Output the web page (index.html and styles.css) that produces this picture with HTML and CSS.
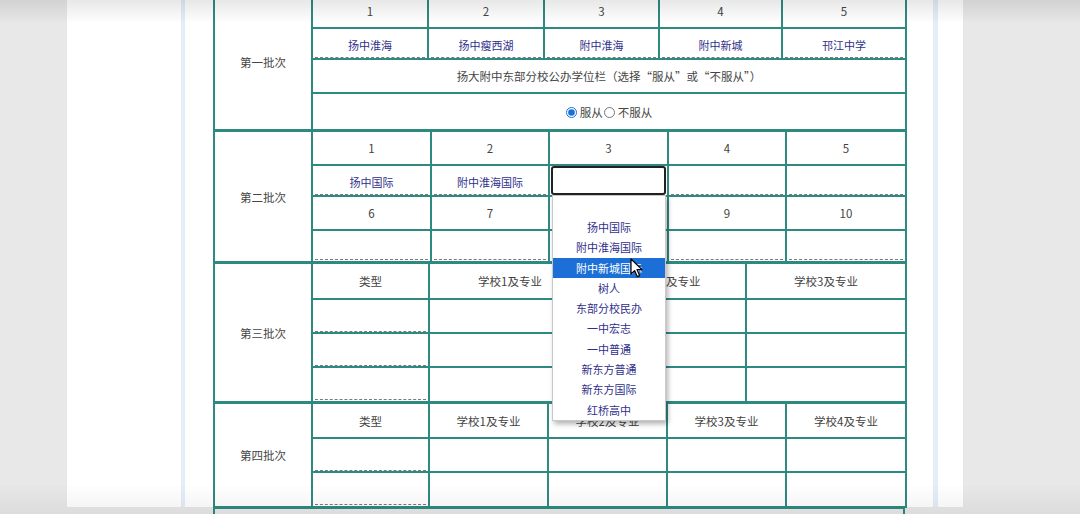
FILE: index.html
```html
<!DOCTYPE html>
<html lang="zh-CN">
<head>
    <meta charset="UTF-8">
    <meta name="viewport" content="width=device-width, initial-scale=1.0">
    <title>志愿填报</title>
    <link rel="stylesheet" href="styles.css">
</head>
<body>
    <div class="page">
        <div class="frame">
            <div class="sheet">
                <!-- 第一批次 -->
                <table class="batch">
                    <colgroup>
                        <col class="c-label"><col class="w116"><col class="w116"><col class="w115"><col class="w123"><col class="w124">
                    </colgroup>
                    <tr class="h34">
                        <td rowspan="4" class="label">第一批次</td>
                        <td>1</td><td>2</td><td>3</td><td>4</td><td>5</td>
                    </tr>
                    <tr class="h31">
                        <td><div class="pick">扬中淮海</div></td>
                        <td><div class="pick">扬中瘦西湖</div></td>
                        <td><div class="pick">附中淮海</div></td>
                        <td><div class="pick">附中新城</div></td>
                        <td><div class="pick">邗江中学</div></td>
                    </tr>
                    <tr class="h34">
                        <td colspan="5">扬大附中东部分校公办学位栏（选择“服从”或“不服从”）</td>
                    </tr>
                    <tr class="h37">
                        <td colspan="5" class="radios">
                            <label><input type="radio" name="obey" checked>服从</label><label><input type="radio" name="obey">不服从</label>
                        </td>
                    </tr>
                </table>

                <!-- 第二批次 -->
                <table class="batch">
                    <colgroup>
                        <col class="c-label"><col class="w119"><col class="w118"><col class="w119"><col class="w118"><col class="w120">
                    </colgroup>
                    <tr class="h34">
                        <td rowspan="4" class="label">第二批次</td>
                        <td>1</td><td>2</td><td>3</td><td>4</td><td>5</td>
                    </tr>
                    <tr class="h31">
                        <td><div class="pick">扬中国际</div></td>
                        <td><div class="pick">附中淮海国际</div></td>
                        <td class="open">
                            <div class="select-box"></div>
                            <div class="options">
                                <div class="opt blank"></div>
                                <div class="opt">扬中国际</div>
                                <div class="opt">附中淮海国际</div>
                                <div class="opt active">附中新城国际</div>
                                <div class="opt">树人</div>
                                <div class="opt">东部分校民办</div>
                                <div class="opt">一中宏志</div>
                                <div class="opt">一中普通</div>
                                <div class="opt">新东方普通</div>
                                <div class="opt">新东方国际</div>
                                <div class="opt">红桥高中</div>
                                <svg class="cursor" width="13" height="20" viewBox="0 0 13 20">
                                    <path d="M1 1 L1 16 L4.6 12.6 L7.2 18.6 L9.6 17.6 L7 11.6 L12 11.6 Z" fill="#fff" stroke="#000" stroke-width="1.2" stroke-linejoin="round"/>
                                </svg>
                            </div>
                        </td>
                        <td><div class="pick"></div></td>
                        <td><div class="pick"></div></td>
                    </tr>
                    <tr class="h34">
                        <td>6</td><td>7</td><td>8</td><td>9</td><td>10</td>
                    </tr>
                    <tr class="h32">
                        <td><div class="pick"></div></td>
                        <td><div class="pick"></div></td>
                        <td><div class="pick"></div></td>
                        <td><div class="pick"></div></td>
                        <td><div class="pick"></div></td>
                    </tr>
                </table>

                <!-- 第三批次 -->
                <table class="batch">
                    <colgroup>
                        <col class="c-label"><col class="w117"><col class="w162"><col class="w155"><col class="w160">
                    </colgroup>
                    <tr class="h36">
                        <td rowspan="4" class="label">第三批次</td>
                        <td>类型</td><td>学校1及专业</td><td>学校2及专业</td><td>学校3及专业</td>
                    </tr>
                    <tr class="h34"><td><div class="pick tall"></div></td><td></td><td></td><td></td></tr>
                    <tr class="h34"><td><div class="pick tall"></div></td><td></td><td></td><td></td></tr>
                    <tr class="h35"><td><div class="pick tall"></div></td><td></td><td></td><td></td></tr>
                </table>

                <!-- 第四批次 -->
                <table class="batch">
                    <colgroup>
                        <col class="c-label"><col class="w117"><col class="w119"><col class="w119"><col class="w119"><col class="w120">
                    </colgroup>
                    <tr class="h35">
                        <td rowspan="3" class="label">第四批次</td>
                        <td>类型</td><td>学校1及专业</td><td>学校2及专业</td><td>学校3及专业</td><td>学校4及专业</td>
                    </tr>
                    <tr class="h34"><td><div class="pick tall"></div></td><td></td><td></td><td></td><td></td></tr>
                    <tr class="h35"><td><div class="pick tall"></div></td><td></td><td></td><td></td><td></td></tr>
                </table>

                <table class="batch last">
                    <tr class="h36"><td></td></tr>
                </table>
            </div>
        </div>
    </div>
    <div class="shade-top"></div>
    <div class="shade-bottom"></div>
</body>
</html>
```

FILE: styles.css
```css
html, body {
    height: 514px;
    overflow: hidden;
}
body {
    margin: 0;
    background-color: #e8e8e8;
    font-family: "Noto Sans CJK SC", "Noto Sans", sans-serif;
    font-size: 11.5px;
    color: #444;
}
.page {
    width: 896px;
    height: 514px;
    margin-left: 67px;
    padding-left: 114px;
    box-sizing: border-box;
    background-color: #fff;
}
.frame {
    width: 757px;
    height: 514px;
    box-sizing: border-box;
    padding: 0 28px;
    border-left: 4px solid #e3eef9;
    border-right: 5px solid #e3eef9;
}
.sheet {
    margin-top: -7px;
}
.batch {
    width: 692px;
    table-layout: fixed;
    border-collapse: collapse;
    border: 2px solid #2e8a80;
}
.batch + .batch {
    margin-top: -1px;
}
.batch td {
    border: 2px solid #2e8a80;
    padding: 0;
    text-align: center;
    vertical-align: middle;
}
.batch .label {
    color: #444;
}
.c-label { width: 98px; }
.w115 { width: 115px; }
.w116 { width: 116px; }
.w117 { width: 117px; }
.w118 { width: 118px; }
.w119 { width: 119px; }
.w120 { width: 120px; }
.w123 { width: 123px; }
.w124 { width: 124px; }
.w155 { width: 155px; }
.w160 { width: 160px; }
.w162 { width: 162px; }

.h31 { height: 31px; }
.h32 { height: 32px; }
.h34 { height: 34px; }
.h35 { height: 35px; }
.h36 { height: 36px; }
.h37 { height: 37px; }

.pick {
    height: 26px;
    margin: 0 2px;
    padding-top: 1px;
    line-height: 28px;
    border-bottom: 1px dashed #7a7a7a;
    color: #30308a;
    font-size: 11px;
}
.pick.tall {
    height: 29px;
}
.radios label {
    color: #444;
}
.radios input {
    width: 11px;
    height: 11px;
    margin: 0 3px 0 0;
    vertical-align: -1px;
    accent-color: #1a6fd8;
}
.radios label + label input {
    margin-left: 1px;
}

/* open select in 第二批次 */
.open {
    position: relative;
}
.select-box {
    height: 29px;
    margin: 0 1px;
    box-sizing: border-box;
    border: 2px solid #222;
    border-radius: 3px;
    background-color: #fff;
}
.options {
    position: absolute;
    left: 2px;
    top: 29px;
    width: 114px;
    box-sizing: border-box;
    background-color: #fff;
    border: 1px solid #c9c9c9;
    box-shadow: 2px 3px 5px rgba(0, 0, 0, 0.3);
    z-index: 5;
}
.opt {
    height: 20.3px;
    line-height: 20px;
    color: #30308a;
    font-size: 11px;
}
.opt.blank {
    height: 21px;
}
.opt.active {
    background-color: #1d6fd8;
    color: #fff;
}
.cursor {
    position: absolute;
    left: 77px;
    top: 62px;
}

.batch.last {
    height: 40px;
}

.shade-top {
    position: fixed;
    left: 0;
    right: 0;
    top: 0;
    height: 24px;
    background: linear-gradient(rgba(0, 0, 0, 0.09), rgba(0, 0, 0, 0));
    pointer-events: none;
}
.shade-bottom {
    position: fixed;
    left: 0;
    right: 0;
    bottom: 0;
    height: 30px;
    background: linear-gradient(rgba(0, 0, 0, 0), rgba(0, 0, 0, 0.05));
    pointer-events: none;
}
```
